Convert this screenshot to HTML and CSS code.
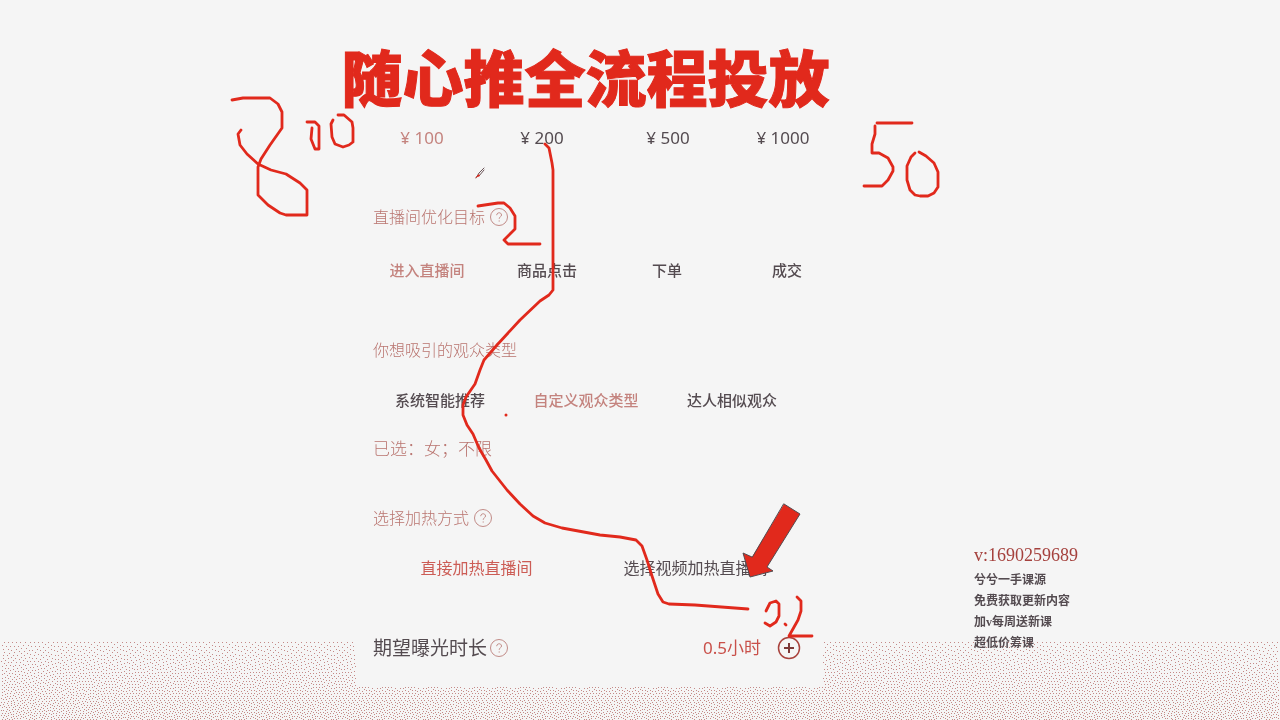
FILE: index.html
```html
<!DOCTYPE html>
<html lang="zh-CN">
<head>
<meta charset="utf-8">
<meta name="viewport" content="width=device-width, initial-scale=1">
<title>随心推全流程投放</title>
<link rel="stylesheet" href="styles.css">
</head>
<body>
<canvas class="grain" aria-hidden="true"></canvas>
<div class="page">
  <main class="panel">
    <h1 class="title">随心推全流程投放</h1>

    <div class="options prices">
      <button class="option rose" type="button">¥ 100</button>
      <button class="option" type="button">¥ 200</button>
      <button class="option" type="button">¥ 500</button>
      <button class="option" type="button">¥ 1000</button>
    </div>

    <section class="group goal">
      <h2 class="label">直播间优化目标
        <button class="help" type="button" aria-label="帮助"><svg viewBox="0 0 18 18"><circle cx="9" cy="9" r="8.5"/><path d="M6.7 7.2C6.7 4 11.5 4 11.5 7C11.5 8.8 9.2 8.8 9.2 10.8M9.2 12.4V13.6"/></svg></button>
      </h2>
      <div class="options four">
        <button class="option rose" type="button">进入直播间</button>
        <button class="option" type="button">商品点击</button>
        <button class="option" type="button">下单</button>
        <button class="option" type="button">成交</button>
      </div>
    </section>

    <section class="group audience">
      <h2 class="label">你想吸引的观众类型</h2>
      <div class="options three">
        <button class="option" type="button">系统智能推荐</button>
        <button class="option rose" type="button">自定义观众类型</button>
        <button class="option" type="button">达人相似观众</button>
      </div>
      <p class="chosen">已选：女；不限</p>
    </section>

    <section class="group heat">
      <h2 class="label">选择加热方式
        <button class="help" type="button" aria-label="帮助"><svg viewBox="0 0 18 18"><circle cx="9" cy="9" r="8.5"/><path d="M6.7 7.2C6.7 4 11.5 4 11.5 7C11.5 8.8 9.2 8.8 9.2 10.8M9.2 12.4V13.6"/></svg></button>
      </h2>
      <div class="options two">
        <button class="option warm" type="button">直接加热直播间</button>
        <button class="option" type="button">选择视频加热直播间</button>
      </div>
    </section>

    <section class="group duration">
      <h2 class="label strong">期望曝光时长
        <button class="help" type="button" aria-label="帮助"><svg viewBox="0 0 18 18"><circle cx="9" cy="9" r="8.5"/><path d="M6.7 7.2C6.7 4 11.5 4 11.5 7C11.5 8.8 9.2 8.8 9.2 10.8M9.2 12.4V13.6"/></svg></button>
      </h2>
      <div class="stepper">
        <span>0.5小时</span>
        <button class="plus" type="button" aria-label="增加"><svg viewBox="0 0 24 24"><circle cx="12" cy="12" r="10.5"/><path class="cross" d="M12 7V17M7 12H17"/></svg></button>
      </div>
    </section>
  </main>

  <aside class="contact">
    <p class="wechat">v:1690259689</p>
    <p>兮兮一手课源</p>
    <p>免费获取更新内容</p>
    <p>加v每周送新课</p>
    <p>超低价筹课</p>
  </aside>
</div>

<svg class="ink" viewBox="0 0 1280 720" aria-hidden="true">
  <path d="M232 100L243 98H270L278 104L282 112V128L270 145L261 159L258 167V195L268 205L280 213L286 215H307V190L300 183L286 174L271 170L258 164L247 154L240 145L238 134L241 130"/>
  <path d="M307 122H315L319 126V149H315L311 139L312 128"/>
  <path d="M338 115H344L352 122L353 128V142L349 145L343 147L335 144L332 137L331 124L333 120"/>
  <path d="M478 206L498 203H504L510 208L515 216V229L504 240L508 244H540"/>
  <path d="M545 144L549 148L552 163L553 170V290L549 295L540 301L520 320L497 345L484 360L480 370L475 384L466 397L463 405V415L467 425L473 434L479 448L486 460L492 471L507 490L520 504L533 516L545 523L562 528L600 535L620 537L636 540L642 546L647 560L652 576L658 594L663 602L669 604L695 605L748 609"/>
  <path d="M877 123H912M875 126V134L872 144V153H879L888 158L893 167V171L888 180L882 186H864"/>
  <path d="M915 153L911 157L907 166V180L910 190L915 195L920 196H928L934 193L938 187V172L934 163L926 156L919 152"/>
  <path d="M766 611L770 603L776 601L779 604V616L776 622L770 626L765 623M785 624L786 625M797 597L801 601V611L798 620L789 636H812"/>
  <circle class="dot" cx="506" cy="415" r="1.5"/>
  <path class="arrow" d="M784 504L800 514L767 567L773 571L750 577L743 553L752 557Z"/>
  <path class="pen" d="M476 178L479 173L484 168M479 176L484 170"/>
  <path class="nib" d="M475 178L479 174L480 176Z"/>
</svg>
<script src="grain.js"></script>
</body>
</html>
```
FILE: styles.css
```css
* {
  box-sizing: border-box;
}

body {
  margin: 0;
  min-height: 100vh;
  background: #f5f5f5;
  color: #544b50;
  font-family: "Noto Sans", "Noto Sans CJK SC", sans-serif;
  overflow-x: hidden;
}

h1, h2, p {
  margin: 0;
}

button {
  padding: 0;
  border: 0;
  background: none;
  color: inherit;
  font: inherit;
  cursor: pointer;
}

.grain {
  position: absolute;
  inset: 0;
  z-index: -1;
  width: 100%;
  height: 100%;
}

.page {
  display: grid;
  grid-template-columns: 356fr 467fr 151fr 306fr;
  align-items: start;
}

.panel {
  grid-column: 2;
  min-width: 0;
  padding: 44px 0 25px;
  background: #f5f5f5;
}

.title {
  display: flex;
  justify-content: center;
  margin: 0 -20px 16px;
  padding-right: 8px;
  color: #e1291c;
  font-family: "Noto Sans CJK SC", sans-serif;
  font-size: 61px;
  font-weight: 900;
  line-height: 64px;
  white-space: nowrap;
  -webkit-text-stroke: 1px #e1291c;
}

.options {
  display: grid;
  margin-left: 11px;
  font-size: 15px;
  font-weight: 500;
  line-height: 28px;
}

.option {
  white-space: nowrap;
}

.prices {
  grid-template-columns: 120px 120px 132px 98px;
  margin-left: 6px;
  font-size: 17px;
  font-weight: 400;
}

.four {
  grid-template-columns: repeat(4, 120px);
}

.three {
  grid-template-columns: repeat(3, 146px);
}

.two {
  grid-template-columns: repeat(2, 219px);
  font-size: 16px;
  font-weight: 400;
}

.rose {
  color: #c4837e;
}

.warm {
  color: #cc5c55;
}

.label {
  display: flex;
  align-items: center;
  gap: 5px;
  margin-left: 17px;
  color: #b9746f;
  font-size: 16px;
  font-weight: 300;
  line-height: 28px;
}

.strong {
  gap: 3px;
  color: #544b50;
  font-size: 19px;
  font-weight: 400;
}

.goal {
  margin-top: 51px;
}

.goal .options {
  margin-top: 25px;
}

.audience {
  margin-top: 52px;
}

.audience .options,
.heat .options {
  margin-top: 22px;
}

.chosen {
  margin: 21px 0 0 17px;
  color: #b9746f;
  font-size: 17px;
  font-weight: 300;
  line-height: 28px;
}

.heat {
  margin-top: 41px;
}

.duration {
  display: flex;
  justify-content: space-between;
  margin-top: 52px;
  padding-right: 22px;
}

.help {
  width: 18px;
  height: 18px;
  color: #c28c88;
}

.help svg,
.plus svg {
  display: block;
  width: 100%;
  overflow: visible;
  fill: none;
  stroke: currentColor;
}

.stepper {
  display: flex;
  align-items: center;
  gap: 16px;
  color: #c9504a;
  font-size: 17px;
  line-height: 28px;
}

.plus {
  width: 24px;
  height: 24px;
  color: #a8423c;
}

.plus svg {
  stroke-width: 1.5;
}

.plus .cross {
  stroke: #7d3a38;
  stroke-width: 2;
}

.contact {
  grid-column: 4;
  align-self: end;
  padding-bottom: 33px;
  font-family: "Liberation Serif", "Noto Sans CJK SC", serif;
  font-size: 12px;
  font-weight: 700;
  line-height: 21px;
}

.wechat {
  margin-bottom: 4px;
  color: #a5413d;
  font-size: 18px;
  font-weight: 400;
}

.ink {
  position: absolute;
  top: 0;
  left: 0;
  width: 100%;
  fill: none;
  stroke: #e1291c;
  stroke-width: 2.8;
  stroke-linecap: round;
  stroke-linejoin: round;
  pointer-events: none;
}

.ink .dot {
  fill: #e1291c;
  stroke: none;
}

.ink .arrow {
  fill: #e1291c;
  stroke: #544b50;
  stroke-width: 1;
}

.ink .pen {
  stroke: #6b5558;
  stroke-width: 1;
}

.ink .nib {
  fill: #e1291c;
  stroke: none;
}
```
FILE: grain.js
```js
// Stippled floor: a light vertical gradient, error-diffused to single dots.
const canvas = document.querySelector(".grain");
const width = canvas.width = window.innerWidth;
const height = canvas.height = window.innerHeight;
const context = canvas.getContext("2d");
const floor = Math.round(height * 8 / 9);
let row = new Float32Array(width + 2);

context.fillStyle = "#c48a88";
for (let y = floor; y < height; y++) {
  const next = new Float32Array(width + 2);
  const depth = (y - floor) / (height - floor);
  const density = 0.06 + 0.1 * depth;
  const step = (y - floor) % 2 ? -1 : 1;
  for (let i = 0; i < width; i++) {
    const x = step > 0 ? i : width - 1 - i;
    const seed = y === floor ? (x * 37 % 23) / 90 : 0;
    const value = density + row[x + 1] + seed;
    const dot = value > 0.5 ? 1 : 0;
    const error = value - dot;
    if (dot) context.fillRect(x, y, 1, 1);
    row[x + 1 + step] += error * 7 / 16;
    next[x + 1 - step] += error * 3 / 16;
    next[x + 1] += error * 5 / 16;
    next[x + 1 + step] += error / 16;
  }
  row = next;
}
```
